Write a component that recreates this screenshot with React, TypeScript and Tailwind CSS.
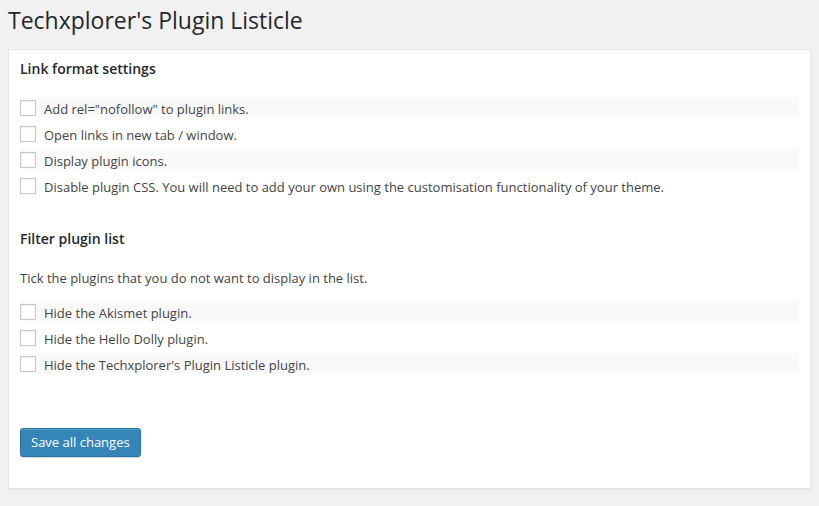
import React from "react";

const linkOptions = [
  'Add rel="nofollow" to plugin links.',
  "Open links in new tab / window.",
  "Display plugin icons.",
  "Disable plugin CSS. You will need to add your own using the customisation functionality of your theme.",
];

const pluginOptions = [
  "Hide the Akismet plugin.",
  "Hide the Hello Dolly plugin.",
  "Hide the Techxplorer's Plugin Listicle plugin.",
];

function OptionRow({ label, striped }: { label: string; striped: boolean }) {
  return (
    <label className={`flex h-5 items-start gap-2 ${striped ? "bg-[#f9f9f9]" : ""}`}>
      <span className="mt-[3px] h-4 w-4 shrink-0 border border-[#c4c8cc] bg-white shadow-[inset_0_1px_2px_rgba(0,0,0,0.07)]" />
      <span className="pt-[2px] leading-5">{label}</span>
    </label>
  );
}

export default function App() {
  return (
    <div
      className="min-h-[506px] bg-[#f1f1f1] px-2 pt-[6px] pb-4 text-[13px] text-[#444]"
      style={{ fontFamily: '"Open Sans", "Noto Sans", sans-serif' }}
    >
      <h1 className="text-[23px] leading-[29px] font-normal text-[#23282d]">Techxplorer's Plugin Listicle</h1>

      <div className="mt-[14px] border border-[#e5e5e5] bg-white px-[11px] pt-[9px] pb-[31px] shadow-[0_1px_1px_rgba(0,0,0,0.04)]">
        <h2 className="text-[14px] leading-5 font-semibold text-[#23282d]">Link format settings</h2>
        <div className="mt-[18px] flex flex-col gap-[6px]">
          {linkOptions.map((o, i) => (
            <OptionRow key={o} label={o} striped={i % 2 === 0} />
          ))}
        </div>

        <h2 className="mt-[34px] text-[14px] leading-5 font-semibold text-[#23282d]">Filter plugin list</h2>
        <p className="mt-[19px] leading-5">Tick the plugins that you do not want to display in the list.</p>
        <div className="mt-[13px] flex flex-col gap-[6px]">
          {pluginOptions.map((o, i) => (
            <OptionRow key={o} label={o} striped={i % 2 === 0} />
          ))}
        </div>

        <button className="mt-[55px] h-[29px] rounded-[3px] border border-[#2a74a6] bg-[#3685b9] px-[10px] text-[13px] text-white shadow-[inset_0_1px_0_rgba(120,200,230,0.4),0_1px_0_rgba(0,0,0,0.15)]">
          Save all changes
        </button>
      </div>
    </div>
  );
}
